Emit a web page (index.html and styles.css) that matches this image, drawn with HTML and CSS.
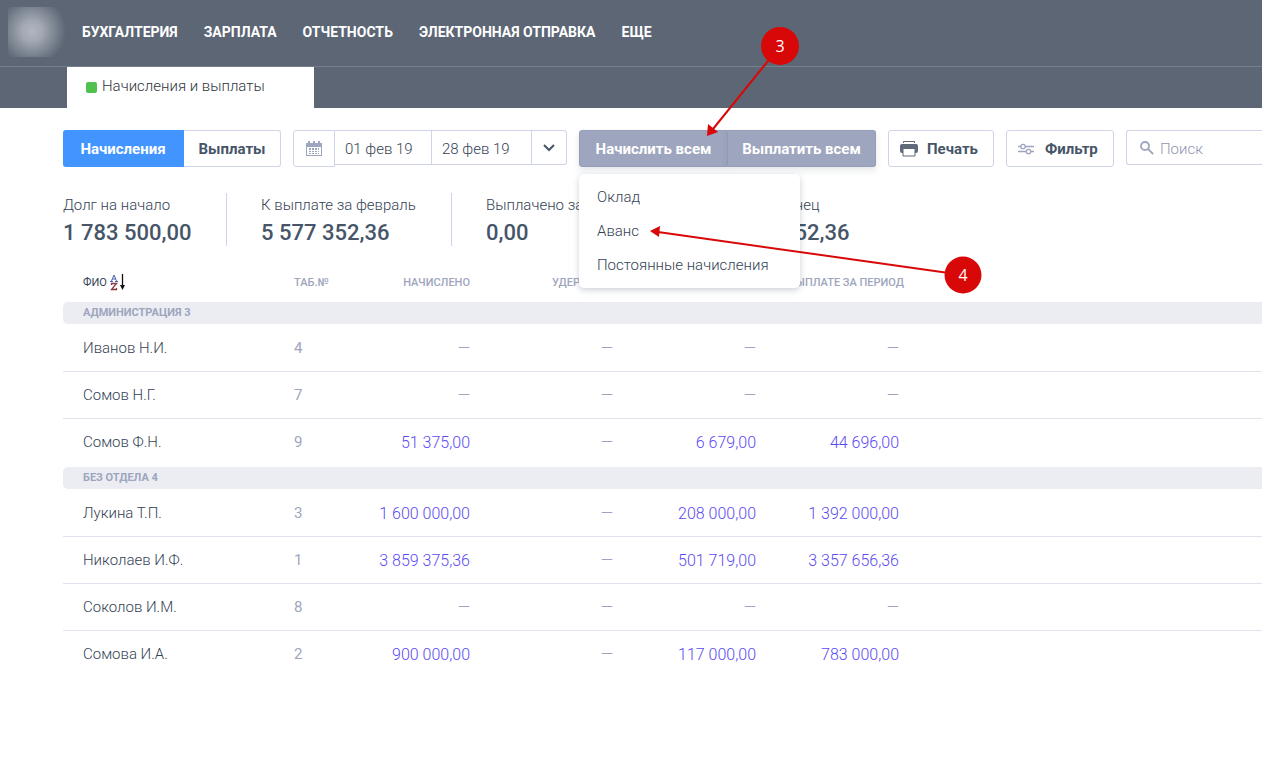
FILE: index.html
```html
<!DOCTYPE html>
<html lang="ru">
<head>
<meta charset="utf-8">
<title>Начисления и выплаты</title>
<link rel="stylesheet" href="styles.css">
</head>
<body>
<header class="header">
  <div class="topbar">
    <div class="logo"></div>
    <nav class="nav">
      <a href="#">БУХГАЛТЕРИЯ</a>
      <a href="#">ЗАРПЛАТА</a>
      <a href="#">ОТЧЕТНОСТЬ</a>
      <a href="#">ЭЛЕКТРОННАЯ ОТПРАВКА</a>
      <a href="#">ЕЩЕ</a>
    </nav>
  </div>
  <div class="tabs">
    <a class="tab" href="#"><span class="tab-mark"></span>Начисления и выплаты</a>
  </div>
</header>

<main class="main">
  <div class="toolbar">
    <div class="switch">
      <button class="switch-item switch-item-active" type="button">Начисления</button>
      <button class="switch-item" type="button">Выплаты</button>
    </div>

    <div class="period">
      <button class="period-calendar" type="button" aria-label="Календарь">
        <svg width="16" height="16" viewBox="0 0 16 16">
          <path fill="#9ea5be" d="M0 2h2V0h2v2h3V0h2v2h3V0h2v2h2v13H0z"/>
          <path fill="#fff" d="M1 6h14v8H1z"/>
          <path fill="#9ea5be" d="M3 7h2v2H3zm3 0h2v2H6zm3 0h2v2H9zm3 0h1v2h-1zM3 10h2v1H3zm3 0h2v1H6zm3 0h2v1H9zm3 0h1v1h-1zM3 12h2v1H3zm3 0h2v1H6zm3 0h2v1H9zm3 0h1v1h-1z"/>
        </svg>
      </button>
      <input class="period-date" type="text" value="01 фев 19" aria-label="Начало периода">
      <input class="period-date period-date-end" type="text" value="28 фев 19" aria-label="Конец периода">
      <button class="period-more" type="button" aria-label="Выбрать период">
        <svg width="12" height="8" viewBox="0 0 12 8"><path d="M1 1l5 5 5-5" fill="none" stroke="#465568" stroke-width="2"/></svg>
      </button>
    </div>

    <div class="actions">
      <button class="action" type="button" aria-expanded="true">Начислить всем</button>
      <button class="action" type="button">Выплатить всем</button>
      <div class="menu">
        <a href="#">Оклад</a>
        <a href="#">Аванс</a>
        <a href="#">Постоянные начисления</a>
      </div>
    </div>

    <button class="tool" type="button">
      <svg width="18" height="16" viewBox="0 0 18 16">
        <path d="M3 2V1a1 1 0 0 1 1-1h10a1 1 0 0 1 1 1v1h-1V1H4v1z" fill="#5f6a7a"/>
        <path d="M2 3h14a2 2 0 0 1 2 2v5a2 2 0 0 1-2 2H2a2 2 0 0 1-2-2V5a2 2 0 0 1 2-2z" fill="#5f6a7a"/>
        <path d="M3 7.500h12V15H3z" fill="#fff" stroke="#5f6a7a"/>
      </svg>
      Печать
    </button>
    <button class="tool tool-filter" type="button">
      <svg width="16" height="12" viewBox="0 0 16 12" fill="none" stroke="#9ea5be" stroke-width="1.300">
        <path d="M0 3.500h2.700M7.300 3.500H16M0 8.500h8.200M12.800 8.500H16"/>
        <circle cx="5" cy="3.500" r="2.200"/><circle cx="10.500" cy="8.500" r="2.200"/>
      </svg>
      Фильтр
    </button>
    <label class="search">
      <svg width="14" height="14" viewBox="0 0 14 14" fill="none" stroke="#9ea5be" stroke-width="1.800">
        <circle cx="5" cy="5" r="4"/><path d="M8 8l5.200 5.200"/>
      </svg>
      <input type="search" placeholder="Поиск" aria-label="Поиск">
    </label>
  </div>

  <dl class="stats">
    <div class="stat"><dt>Долг на начало</dt><dd>1 783 500,00</dd></div>
    <div class="stat"><dt>К выплате за февраль</dt><dd>5 577 352,36</dd></div>
    <div class="stat"><dt>Выплачено за февраль</dt><dd>0,00</dd></div>
    <div class="stat"><dt>Долг на конец</dt><dd>7 360 852,36</dd></div>
  </dl>

  <table class="grid">
    <colgroup><col class="col-name"><col class="col-id"><col class="col-sum"><col class="col-sum"><col class="col-sum"><col class="col-sum"><col></colgroup>
    <thead>
      <tr>
        <th class="name sorted">
          <button type="button">ФИО
            <svg width="17" height="17" viewBox="0 0 17 17" fill="none">
              <path d="M1.500 7L4 1l2.500 6M2.500 5h3M0 7.500h3M5 7.500h3" stroke="#4a62ae"/>
              <path d="M1.500 11V9.500h5L1.500 15.500h5V14" stroke="#8c3440" stroke-width="1.300"/>
              <path d="M12.500 0v13" stroke="#111" stroke-width="1.300"/><path d="M10 11h5l-2.500 5z" fill="#111"/>
            </svg>
          </button>
        </th>
        <th>ТАБ.№</th><th class="sum">НАЧИСЛЕНО</th><th class="sum">УДЕРЖАНО</th><th class="sum">НДФЛ</th><th class="sum total">К ВЫПЛАТЕ ЗА ПЕРИОД</th><th></th>
      </tr>
    </thead>
    <tbody>
      <tr><th class="group" colspan="7"><div>АДМИНИСТРАЦИЯ 3</div></th></tr>
      <tr><td class="name">Иванов Н.И.</td><td>4</td><td class="sum">—</td><td class="sum">—</td><td class="sum">—</td><td class="sum">—</td><td></td></tr>
      <tr><td class="name">Сомов Н.Г.</td><td>7</td><td class="sum">—</td><td class="sum">—</td><td class="sum">—</td><td class="sum">—</td><td></td></tr>
      <tr><td class="name">Сомов Ф.Н.</td><td>9</td><td class="sum"><a href="#">51 375,00</a></td><td class="sum">—</td><td class="sum"><a href="#">6 679,00</a></td><td class="sum"><a href="#">44 696,00</a></td><td></td></tr>
    </tbody>
    <tbody>
      <tr><th class="group" colspan="7"><div>БЕЗ ОТДЕЛА 4</div></th></tr>
      <tr><td class="name">Лукина Т.П.</td><td>3</td><td class="sum"><a href="#">1 600 000,00</a></td><td class="sum">—</td><td class="sum"><a href="#">208 000,00</a></td><td class="sum"><a href="#">1 392 000,00</a></td><td></td></tr>
      <tr><td class="name">Николаев И.Ф.</td><td>1</td><td class="sum"><a href="#">3 859 375,36</a></td><td class="sum">—</td><td class="sum"><a href="#">501 719,00</a></td><td class="sum"><a href="#">3 357 656,36</a></td><td></td></tr>
      <tr><td class="name">Соколов И.М.</td><td>8</td><td class="sum">—</td><td class="sum">—</td><td class="sum">—</td><td class="sum">—</td><td></td></tr>
      <tr><td class="name">Сомова И.А.</td><td>2</td><td class="sum"><a href="#">900 000,00</a></td><td class="sum">—</td><td class="sum"><a href="#">117 000,00</a></td><td class="sum"><a href="#">783 000,00</a></td><td></td></tr>
    </tbody>
  </table>
</main>

<svg class="callouts" width="1000" height="310" viewBox="0 0 1000 310">
  <g stroke="#d90808" stroke-width="2"><path d="M780 46L713 129"/><path d="M963 275L658 232"/></g>
  <g fill="#d90808">
    <path d="M707 136l1-12 10 8z"/><path d="M650 231l10-5-1 11z"/>
    <circle cx="780" cy="46" r="19"/><circle cx="963" cy="275" r="18.500"/>
  </g>
  <g class="callout-text"><text x="780" y="52">3</text><text x="963" y="281">4</text></g>
</svg>
</body>
</html>
```
FILE: styles.css
```css
* { box-sizing: border-box; }

body {
  margin: 0;
  background: #fff;
  color: #344254;
  font-family: Roboto, "Liberation Sans", sans-serif;
  font-size: 15px;
  font-weight: 300;
  line-height: 20px;
  overflow-x: hidden;
}

a { color: inherit; text-decoration: none; }

button, input {
  margin: 0;
  font: inherit;
  color: inherit;
  background: #fff;
  border: 1px solid #d0d4e8;
  padding: 0;
}

button { cursor: pointer; }

.header { background: #5c6675; }

.topbar {
  display: flex;
  align-items: center;
  height: 67px;
  padding: 0 8px 2px;
  border-bottom: 1px solid #76808d;
}

.logo {
  width: 58px;
  height: 50px;
  margin-right: 16px;
  background: radial-gradient(circle at 24px 24px, #b1b6c0 0, #a3a9b4 10px, #7c8591 23px, #5c6675 34px);
}

.nav {
  display: flex;
  gap: 26px;
  color: #fff;
  font-size: 14px;
  font-weight: 700;
}

.tabs { display: flex; padding-left: 67px; }

.tab {
  display: flex;
  align-items: center;
  width: 247px;
  height: 41px;
  padding: 0 19px 3px;
  background: #fff;
  color: #30353d;
}

.tab-mark {
  width: 11px;
  height: 11px;
  margin: 2px 5px 0 0;
  border-radius: 2px;
  background: #50c150;
}

.main { padding: 22px 0 0 63px; }

.toolbar {
  display: flex;
  align-items: flex-start;
  gap: 12px;
}

.switch { display: flex; }

.switch-item {
  width: 97px;
  height: 37px;
  border-left: 0;
  border-radius: 0 3px 3px 0;
  color: #465568;
  font-weight: 700;
}

.switch-item-active {
  width: 121px;
  border-color: #4295ff;
  border-radius: 3px 0 0 3px;
  background: #4295ff;
  color: #fff;
}

.period { display: flex; }

.period-calendar {
  display: grid;
  place-items: center;
  width: 42px;
  height: 37px;
  border-radius: 3px 0 0 3px;
}

.period-date {
  width: 97px;
  height: 35px;
  padding: 2px 0 0 10px;
  border-left: 0;
}

.period-date-end { width: 100px; }

.period-more {
  display: grid;
  place-items: center;
  width: 35px;
  height: 35px;
  border-left: 0;
  border-radius: 0 3px 3px 0;
}

.actions { position: relative; display: flex; }

.action {
  width: 149px;
  height: 37px;
  border-color: #969db8;
  border-radius: 3px 0 0 3px;
  background: #9ea5be;
  box-shadow: 0 3px 6px rgba(70, 85, 104, 0.15);
  color: #fff;
  font-weight: 700;
}

.action + .action { width: 148px; border-left: 0; border-radius: 0 3px 3px 0; }

.menu {
  position: absolute;
  top: 44px;
  left: 0;
  z-index: 1;
  width: 221px;
  padding: 6px 0;
  border-radius: 5px;
  background: #fff;
  box-shadow: 0 2px 6px rgba(70, 85, 104, 0.28);
}

.menu a { display: block; padding: 7px 18px; }

.tool {
  display: flex;
  align-items: center;
  gap: 9px;
  width: 106px;
  height: 37px;
  padding-left: 11px;
  border-radius: 3px;
  color: #465568;
  font-weight: 700;
}

.tool-filter { width: 108px; gap: 11px; }

.search {
  display: flex;
  flex: 1;
  align-items: center;
  gap: 6px;
  min-width: 0;
  height: 35px;
  padding-left: 13px;
  border: 1px solid #d0d4e8;
  border-right: 0;
  border-radius: 3px 0 0 3px;
}

.search input { flex: 1; min-width: 0; height: 24px; padding-top: 2px; border: 0; }

.search input::placeholder { color: #9096b0; }

.stats {
  display: grid;
  grid-template-columns: 164px 225px 235px auto;
  margin: 26px 0 0;
}

.stat { height: 53px; }

.stat + .stat { padding-left: 34px; }

.stat:not(:last-child) { border-right: 1px solid #d0d4e8; }

.stat dt { padding-top: 2px; white-space: nowrap; }

.stat dd {
  margin: 3px 0 0;
  color: #465568;
  font-size: 22px;
  line-height: 30px;
  font-weight: 500;
}

.grid {
  width: 100%;
  margin-top: 16px;
  border-spacing: 0;
  table-layout: fixed;
  color: #9ea5be;
}

.col-name { width: 231px; }
.col-id { width: 53px; }
.col-sum { width: 143px; }

.grid th, .grid td { padding: 0; text-align: left; white-space: nowrap; }

.grid th { font-size: 11px; font-weight: 500; }

.grid thead th { height: 39px; padding-top: 2px; }

.grid tbody td {
  height: 47px;
  border-bottom: 1px solid #e0e2ec;
  font-weight: 400;
}

.grid tbody tr:last-child td { border-bottom-color: transparent; }

.grid .name { padding-left: 20px; color: #344254; }

.grid thead .name { font-weight: 400; }

.grid tbody .name { font-weight: 300; }

.grid .sum { padding-right: 20px; text-align: right; }

.grid tbody .sum { padding-top: 2px; font-size: 16px; font-weight: 300; }

.grid .total { padding-right: 15px; }

.grid .sum a { color: #5a4af2; }

.sorted button {
  display: flex;
  align-items: center;
  gap: 3px;
  border: 0;
}

.grid .group { padding: 1px 0; font-weight: 700; }

.group div {
  height: 22px;
  padding: 1px 0 0 20px;
  border-radius: 5px 0 0 5px;
  background: #ecedf3;
}

.callouts {
  position: absolute;
  top: 0;
  left: 0;
  z-index: 2;
  pointer-events: none;
}

.callout-text {
  fill: #fff;
  font-family: "Open Sans", "Noto Sans", sans-serif;
  font-size: 16px;
  font-weight: 400;
  text-anchor: middle;
}
```
